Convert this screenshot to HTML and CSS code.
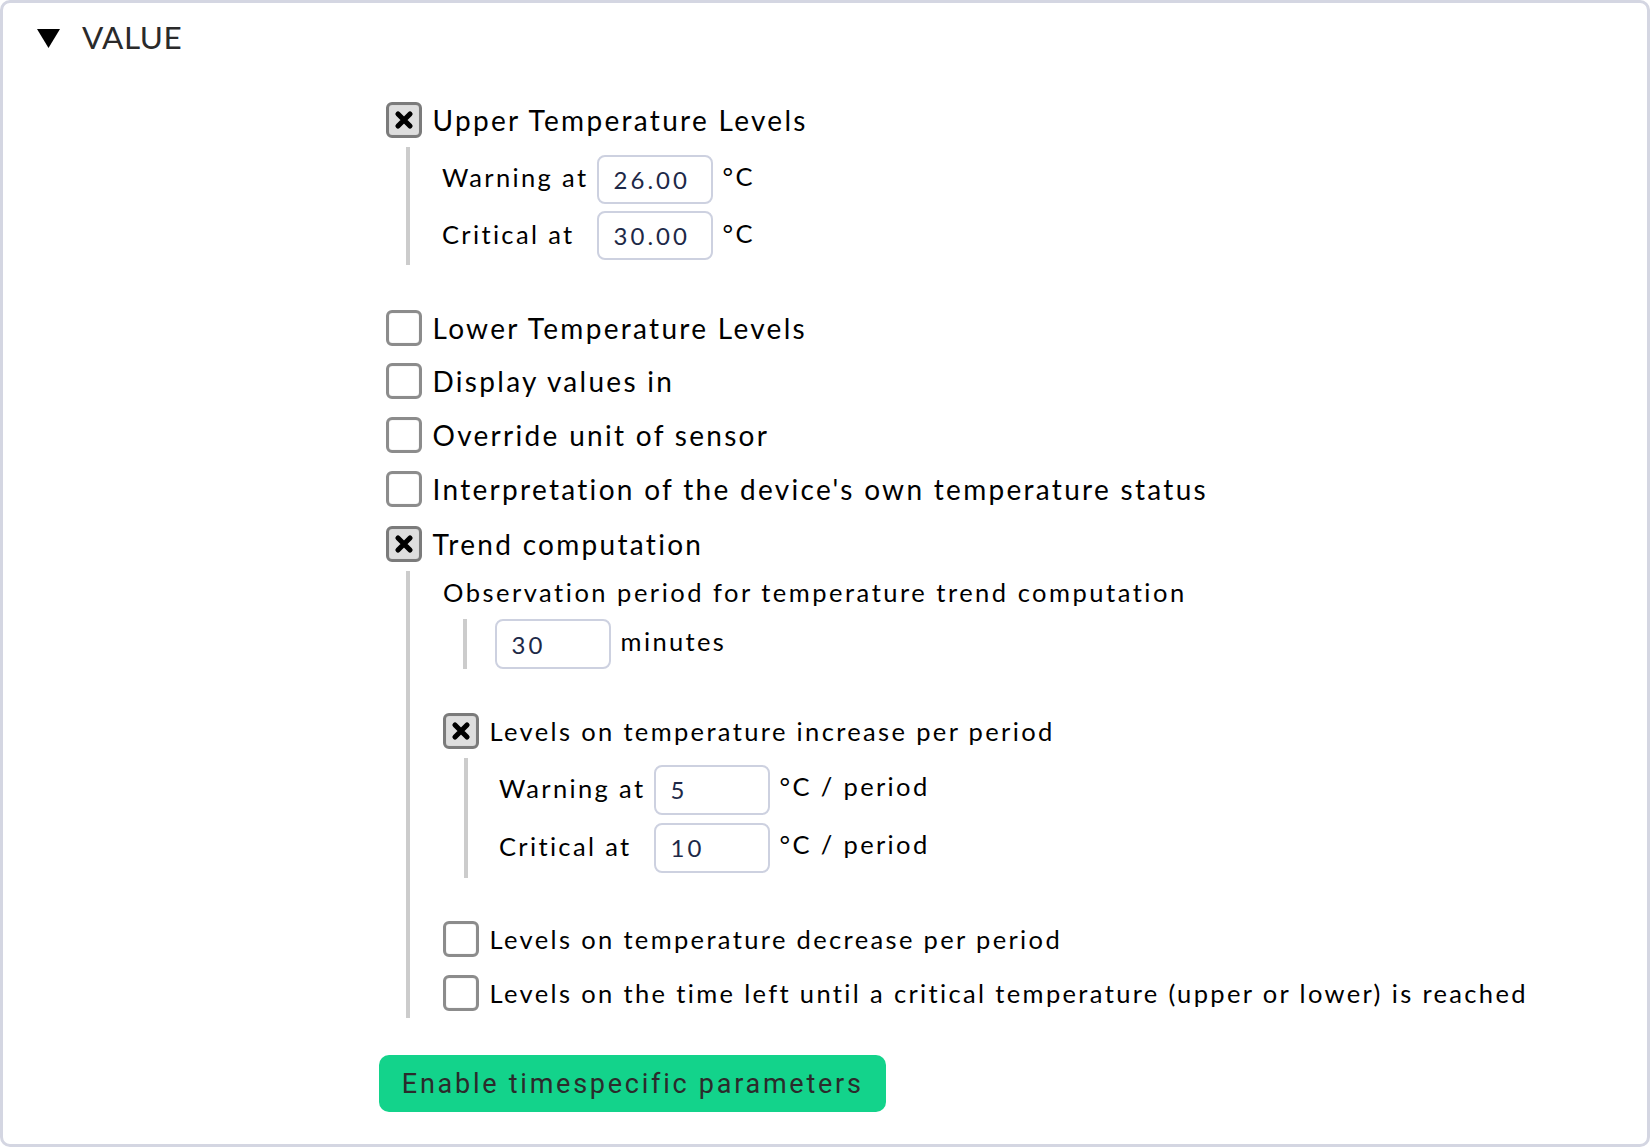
FILE: index.html
```html
<!DOCTYPE html>
<html>
<head>
<meta charset="utf-8">
<link rel="stylesheet" href="styles.css">
</head>
<body>
<div class="box">
  <div class="head">
    <svg class="tri" width="23" height="19" viewBox="0 0 23 19"><polygon points="0,0 23,0 11.5,19" fill="#000"/></svg>
    <span class="title">VALUE</span>
  </div>
  <div class="content">
    <div class="item first">
      <div class="cbrow"><span class="cb checked"><svg viewBox="0 0 20 20" width="20" height="20"><path d="M4 4 L16 16 M16 4 L4 16" stroke="#000" stroke-width="5.2" stroke-linecap="round"/></svg></span><span class="lbl top">Upper Temperature Levels</span></div>
      <div class="nested n1">
        <div class="levels">
          <span class="ltxt">Warning at</span><span class="inp">26.00</span><span class="unit">°C</span>
          <span class="ltxt">Critical at</span><span class="inp">30.00</span><span class="unit">°C</span>
        </div>
      </div>
    </div>
    <div class="item gap44">
      <div class="cbrow"><span class="cb"></span><span class="lbl top">Lower Temperature Levels</span></div>
    </div>
    <div class="item">
      <div class="cbrow"><span class="cb"></span><span class="lbl top">Display values in</span></div>
    </div>
    <div class="item">
      <div class="cbrow"><span class="cb"></span><span class="lbl top">Override unit of sensor</span></div>
    </div>
    <div class="item">
      <div class="cbrow"><span class="cb"></span><span class="lbl top">Interpretation of the device's own temperature status</span></div>
    </div>
    <div class="item trend">
      <div class="cbrow"><span class="cb checked"><svg viewBox="0 0 20 20" width="20" height="20"><path d="M4 4 L16 16 M16 4 L4 16" stroke="#000" stroke-width="5.2" stroke-linecap="round"/></svg></span><span class="lbl top">Trend computation</span></div>
      <div class="nested n2">
        <div class="obs">Observation period for temperature trend computation</div>
        <div class="nested n3">
          <span class="inp tall">30</span><span class="unit">minutes</span>
        </div>
        <div class="item gap44b">
          <div class="cbrow"><span class="cb checked"><svg viewBox="0 0 20 20" width="20" height="20"><path d="M4 4 L16 16 M16 4 L4 16" stroke="#000" stroke-width="5.2" stroke-linecap="round"/></svg></span><span class="lbl sub">Levels on temperature increase per period</span></div>
          <div class="nested n4">
            <div class="levels">
              <span class="ltxt">Warning at</span><span class="inp tall">5</span><span class="unit">°C / period</span>
              <span class="ltxt">Critical at</span><span class="inp tall">10</span><span class="unit">°C / period</span>
            </div>
          </div>
        </div>
        <div class="item gap43">
          <div class="cbrow"><span class="cb"></span><span class="lbl sub">Levels on temperature decrease per period</span></div>
        </div>
        <div class="item">
          <div class="cbrow"><span class="cb"></span><span class="lbl sub">Levels on the time left until a critical temperature (upper or lower) is reached</span></div>
        </div>
      </div>
    </div>
    <div class="btnrow"><span class="btn">Enable timespecific parameters</span></div>
  </div>
</div>
</body>
</html>
```
FILE: styles.css
```css
html, body {
  margin: 0;
  padding: 0;
  background: #fff;
}
body {
  font-family: Lato, "Noto Sans", sans-serif;
  font-size: 25.5px;
  letter-spacing: 2.35px;
  color: #000;
}
.box {
  box-sizing: border-box;
  width: 1650px;
  height: 1147px;
  border: 3px solid #d4d6e2;
  border-radius: 10px;
}
.head {
  display: flex;
  align-items: center;
  height: 70px;
  padding-left: 34px;
}
.tri {
  display: block;
  margin-right: 22px;
}
.title {
  font-size: 31.5px;
  letter-spacing: 0.5px;
  color: #2a2a2a;
  line-height: 1;
}
.content {
  padding-left: 383px;
  margin-top: 29px;
  display: flex;
  flex-direction: column;
}
.item {
  margin-top: 17.7px;
}
.item.first { margin-top: 0; }
.item.gap44 { margin-top: 44.3px; }
.item.trend { margin-top: 18.7px; }
.item.gap43 { margin-top: 43.1px; }
.item.gap44b { margin-top: 44.1px; }
.cbrow {
  display: flex;
  align-items: center;
  height: 36px;
}
.cb {
  box-sizing: border-box;
  width: 36px;
  height: 36px;
  flex: none;
  border: 3px solid #8c8c8c;
  border-radius: 6px;
  background: #fff;
  box-shadow: inset 0 0 1px #bbb;
  display: flex;
  align-items: center;
  justify-content: center;
  margin-right: 10.5px;
}
.cb.checked {
  background: #dedede;
  border-color: #7b7b7b;
}
.lbl {
  line-height: 30px;
  white-space: nowrap;
}
.lbl.top {
  font-size: 28px;
  letter-spacing: 2.3px;
}
.nested {
  border-left: 4px solid #cccccc;
}
.n1 {
  margin-top: 9px;
  margin-left: 20px;
  padding: 7.7px 0 5px 32px;
}
.n2 {
  margin-top: 9px;
  margin-left: 20px;
  padding: 6.4px 0 7.2px 33px;
}
.n3 {
  margin-top: 12.4px;
  margin-left: 20px;
  padding-left: 27.6px;
  display: flex;
  align-items: flex-start;
}
.n4 {
  margin-top: 8.2px;
  margin-left: 21px;
  padding: 7.4px 0 5.6px 31px;
}
.obs {
  line-height: 30px;
  white-space: nowrap;
  letter-spacing: 2.5px;
}
.levels {
  display: grid;
  grid-template-columns: 154.6px 116px auto;
  row-gap: 7.8px;
  align-items: center;
}
.ltxt {
  line-height: 30px;
  white-space: nowrap;
  position: relative;
  top: -2px;
}
.inp {
  box-sizing: border-box;
  width: 116px;
  height: 49px;
  border: 2px solid #cdd1e0;
  border-radius: 8px;
  padding-left: 15px;
  font-size: 24px;
  letter-spacing: 3px;
  color: #1d2948;
  display: flex;
  align-items: center;
}
.inp.tall {
  height: 50px;
}
.unit {
  align-self: start;
  padding-top: 6.5px;
  padding-left: 10px;
  line-height: 30px;
  white-space: nowrap;
}
.btnrow {
  margin-top: 37px;
  margin-left: -7.2px;
  display: flex;
}
.btn {
  box-sizing: border-box;
  width: 507px;
  height: 56.5px;
  background: #13d38b;
  border-radius: 10px;
  padding-left: 23px;
  display: flex;
  align-items: center;
  font-family: Roboto, "Liberation Sans", sans-serif;
  font-size: 27px;
  letter-spacing: 2.75px;
  color: #2b2b2b;
}
```
